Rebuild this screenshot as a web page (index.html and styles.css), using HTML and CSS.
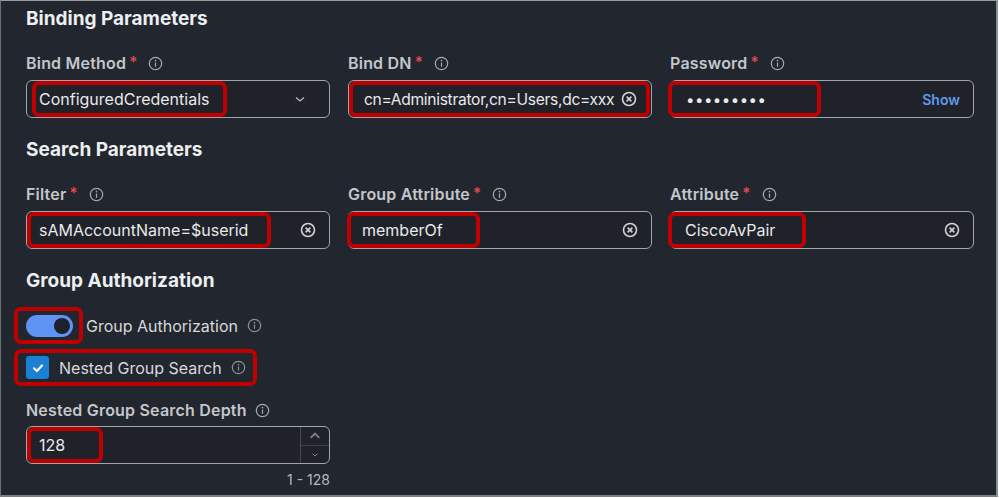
FILE: index.html
```html
<!DOCTYPE html>
<html lang="en">
<head>
  <meta charset="UTF-8" />
  <title>LDAP Parameters</title>
  <link rel="stylesheet" href="styles.css">
</head>
<body>
  <div class="frame">
    <h2>Binding Parameters</h2>
    <div class="row">
      <div class="field">
        <label>Bind Method<span class="req">*</span><svg class="info" viewBox="0 0 16 16"><circle cx="8" cy="8" r="6.6"/><line x1="8" y1="7" x2="8" y2="11.5"/><circle class="dot" cx="8" cy="4.9" r="0.9"/></svg></label>
        <div class="input">
          <span class="hl hl-method">ConfiguredCredentials</span>
          <svg class="chev" viewBox="0 0 12 12"><polyline points="2,4.5 6,8 10,4.5"/></svg>
        </div>
      </div>
      <div class="field">
        <label>Bind DN<span class="req">*</span><svg class="info" viewBox="0 0 16 16"><circle cx="8" cy="8" r="6.6"/><line x1="8" y1="7" x2="8" y2="11.5"/><circle class="dot" cx="8" cy="4.9" r="0.9"/></svg></label>
        <div class="input">
          <span class="hl hl-dn"><span class="val">cn=Administrator,cn=Users,dc=xxx</span><svg class="clear" viewBox="0 0 16 16"><circle cx="8" cy="8" r="6.5"/><path d="M5.6 5.6l4.8 4.8M10.4 5.6l-4.8 4.8"/></svg></span>
        </div>
      </div>
      <div class="field">
        <label>Password<span class="req">*</span><svg class="info" viewBox="0 0 16 16"><circle cx="8" cy="8" r="6.6"/><line x1="8" y1="7" x2="8" y2="11.5"/><circle class="dot" cx="8" cy="4.9" r="0.9"/></svg></label>
        <div class="input">
          <span class="hl hl-pass"><span class="dots">•••••••••</span></span>
          <span class="show">Show</span>
        </div>
      </div>
    </div>

    <h2>Search Parameters</h2>
    <div class="row">
      <div class="field">
        <label>Filter<span class="req">*</span><svg class="info" viewBox="0 0 16 16"><circle cx="8" cy="8" r="6.6"/><line x1="8" y1="7" x2="8" y2="11.5"/><circle class="dot" cx="8" cy="4.9" r="0.9"/></svg></label>
        <div class="input">
          <span class="hl hl-filter">sAMAccountName=$userid</span>
          <svg class="clear" viewBox="0 0 16 16"><circle cx="8" cy="8" r="6.5"/><path d="M5.6 5.6l4.8 4.8M10.4 5.6l-4.8 4.8"/></svg>
        </div>
      </div>
      <div class="field">
        <label>Group Attribute<span class="req">*</span><svg class="info" viewBox="0 0 16 16"><circle cx="8" cy="8" r="6.6"/><line x1="8" y1="7" x2="8" y2="11.5"/><circle class="dot" cx="8" cy="4.9" r="0.9"/></svg></label>
        <div class="input">
          <span class="hl hl-member">memberOf</span>
          <svg class="clear" viewBox="0 0 16 16"><circle cx="8" cy="8" r="6.5"/><path d="M5.6 5.6l4.8 4.8M10.4 5.6l-4.8 4.8"/></svg>
        </div>
      </div>
      <div class="field">
        <label>Attribute<span class="req">*</span><svg class="info" viewBox="0 0 16 16"><circle cx="8" cy="8" r="6.6"/><line x1="8" y1="7" x2="8" y2="11.5"/><circle class="dot" cx="8" cy="4.9" r="0.9"/></svg></label>
        <div class="input">
          <span class="hl hl-cisco">CiscoAvPair</span>
          <svg class="clear" viewBox="0 0 16 16"><circle cx="8" cy="8" r="6.5"/><path d="M5.6 5.6l4.8 4.8M10.4 5.6l-4.8 4.8"/></svg>
        </div>
      </div>
    </div>

    <h2>Group Authorization</h2>
    <div class="option option-first">
      <span class="box-mark toggle-mark"><span class="toggle"><span class="knob"></span></span></span>
      <span class="option-text">Group Authorization</span>
      <svg class="info soft" viewBox="0 0 16 16"><circle cx="8" cy="8" r="6.6"/><line x1="8" y1="7" x2="8" y2="11.5"/><circle class="dot" cx="8" cy="4.9" r="0.9"/></svg>
    </div>
    <div class="option">
      <span class="box-mark check-mark">
        <span class="check"><svg viewBox="0 0 16 16"><polyline points="4,8.3 6.9,11 12,5.4"/></svg></span>
        <span class="option-text">Nested Group Search</span>
        <svg class="info soft" viewBox="0 0 16 16"><circle cx="8" cy="8" r="6.6"/><line x1="8" y1="7" x2="8" y2="11.5"/><circle class="dot" cx="8" cy="4.9" r="0.9"/></svg>
      </span>
    </div>

    <div class="field depth">
      <label>Nested Group Search Depth<svg class="info" viewBox="0 0 16 16"><circle cx="8" cy="8" r="6.6"/><line x1="8" y1="7" x2="8" y2="11.5"/><circle class="dot" cx="8" cy="4.9" r="0.9"/></svg></label>
      <div class="input number">
        <span class="hl hl-depth">128</span>
        <span class="spin">
          <svg viewBox="0 0 12 12"><polyline points="3,7.5 6,4.5 9,7.5"/></svg>
          <svg viewBox="0 0 12 12"><polyline points="3,4.5 6,7.5 9,4.5"/></svg>
        </span>
      </div>
      <div class="hint">1 - 128</div>
    </div>
  </div>
</body>
</html>
```

FILE: styles.css
```css
body {
  margin: 0;
  background: #ffffff;
  font-family: Inter, "Noto Sans", sans-serif;
}
.frame {
  width: 970px;
  height: 488px;
  padding: 6px 0 0 25px;
  background: #22262e;
  border-top: 1px solid #9a9ca0;
  border-left: 1px solid #6c6f74;
  border-right: 2px solid #8d8f93;
  border-bottom: 2px solid #7c7e82;
  color: #e6e7e9;
}
h2 {
  margin: 0;
  font-size: 19px;
  line-height: 24px;
  font-weight: 700;
  color: #eceef0;
}
.row {
  display: grid;
  grid-template-columns: 304px 304px 304px;
  column-gap: 18px;
  margin: 22px 0 20px;
}
label {
  display: flex;
  align-items: center;
  height: 20px;
  margin-bottom: 7px;
  font-size: 16px;
  letter-spacing: 0.2px;
  font-weight: 600;
  color: #c4c6ca;
}
.req {
  color: #e5484d;
  margin-left: 3px;
  align-self: flex-start;
  font-size: 15px;
  line-height: 17px;
}
.info {
  width: 15px;
  height: 15px;
  margin-left: 11px;
  fill: none;
  stroke: #a6a9ae;
  stroke-width: 1.3;
}
.info .dot {
  fill: #a6a9ae;
  stroke: none;
}
.info.soft {
  stroke: #8b8e94;
}
.info.soft .dot {
  fill: #8b8e94;
}
.input {
  display: flex;
  align-items: center;
  height: 38px;
  box-sizing: border-box;
  border: 1.5px solid #a2a5aa;
  border-radius: 6px;
  background: #1f2229;
  padding: 0 13px 0 0;
  font-size: 16px;
  color: #e9e9ea;
}
.hl {
  display: flex;
  align-items: center;
  height: 36px;
  box-sizing: border-box;
  border: 4px solid #c00000;
  border-radius: 7px;
  padding-left: 8px;
  white-space: nowrap;
  overflow: hidden;
  flex-shrink: 0;
}
.hl-method { margin-left: 5px; width: 195px; padding-left: 3px; }
.hl-dn { flex: 1; padding-left: 11px; padding-right: 0; margin-right: -12px; }
.hl-dn .val { flex: 1; font-size: 15.6px; letter-spacing: -0.3px; }
.hl-dn .clear { margin-right: 9px; }
.hl-pass { margin-left: -3px; width: 153px; padding-left: 14px; }
.hl-filter { width: 244px; }
.hl-member { margin-left: -2px; width: 133px; padding-left: 11px; }
.hl-cisco { margin-left: -3px; width: 138px; padding-left: 13px; }
.hl-depth { width: 76px; }
.dots {
  font-size: 15px;
  letter-spacing: 0.5px;
}
.chev {
  width: 12px;
  height: 12px;
  margin-left: auto;
  margin-right: 10px;
  fill: none;
  stroke: #b9bbbf;
  stroke-width: 1.3;
}
.clear {
  width: 16px;
  height: 16px;
  margin-left: auto;
  flex-shrink: 0;
  fill: none;
  stroke: #d2d3d6;
  stroke-width: 1.6;
}
.show {
  margin-left: auto;
  font-size: 14px;
  font-weight: 600;
  color: #5f9cf2;
}
.option {
  display: flex;
  align-items: center;
  height: 37px;
  margin-left: -12px;
  margin-top: 5px;
  font-size: 16px;
  color: #d7d9dc;
}
.option-first {
  margin-top: 14px;
}
.box-mark {
  display: flex;
  align-items: center;
  height: 37px;
  box-sizing: border-box;
  border: 4px solid #c00000;
  border-radius: 7px;
  padding-left: 8px;
}
.toggle-mark {
  width: 69px;
  margin-right: 3px;
}
.toggle {
  display: flex;
  align-items: center;
  justify-content: flex-end;
  width: 47px;
  height: 22px;
  box-sizing: border-box;
  padding-right: 3px;
  border-radius: 11px;
  background: #5f93f4;
}
.knob {
  width: 16px;
  height: 16px;
  border-radius: 50%;
  background: #1c212c;
}
.check-mark {
  width: 243px;
}
.check {
  display: flex;
  align-items: center;
  justify-content: center;
  width: 23px;
  height: 23px;
  border-radius: 3px;
  background: #1b7fd3;
  margin-right: 10px;
}
.check svg {
  width: 16px;
  height: 16px;
  fill: none;
  stroke: #ffffff;
  stroke-width: 2.2;
  stroke-linecap: round;
  stroke-linejoin: round;
}
.option-text + .info {
  margin-left: 9px;
}
.depth {
  width: 304px;
  margin-top: 14px;
}
.depth label {
  margin-bottom: 6px;
}
.depth .info {
  margin-left: 8px;
}
.number {
  padding-right: 0;
}
.spin {
  display: flex;
  flex-direction: column;
  margin-left: auto;
  width: 28px;
  height: 100%;
  border-left: 1px solid #454952;
}
.spin svg {
  flex: 1;
  width: 10px;
  height: 10px;
  align-self: center;
  fill: none;
  stroke: #7d8087;
  stroke-width: 1.2;
}
.spin svg:first-child {
  width: 100%;
  border-bottom: 1px solid #3c4048;
}
.hint {
  margin-top: 7px;
  text-align: right;
  font-size: 14px;
  line-height: 18px;
  color: #b5b7bb;
}
```
